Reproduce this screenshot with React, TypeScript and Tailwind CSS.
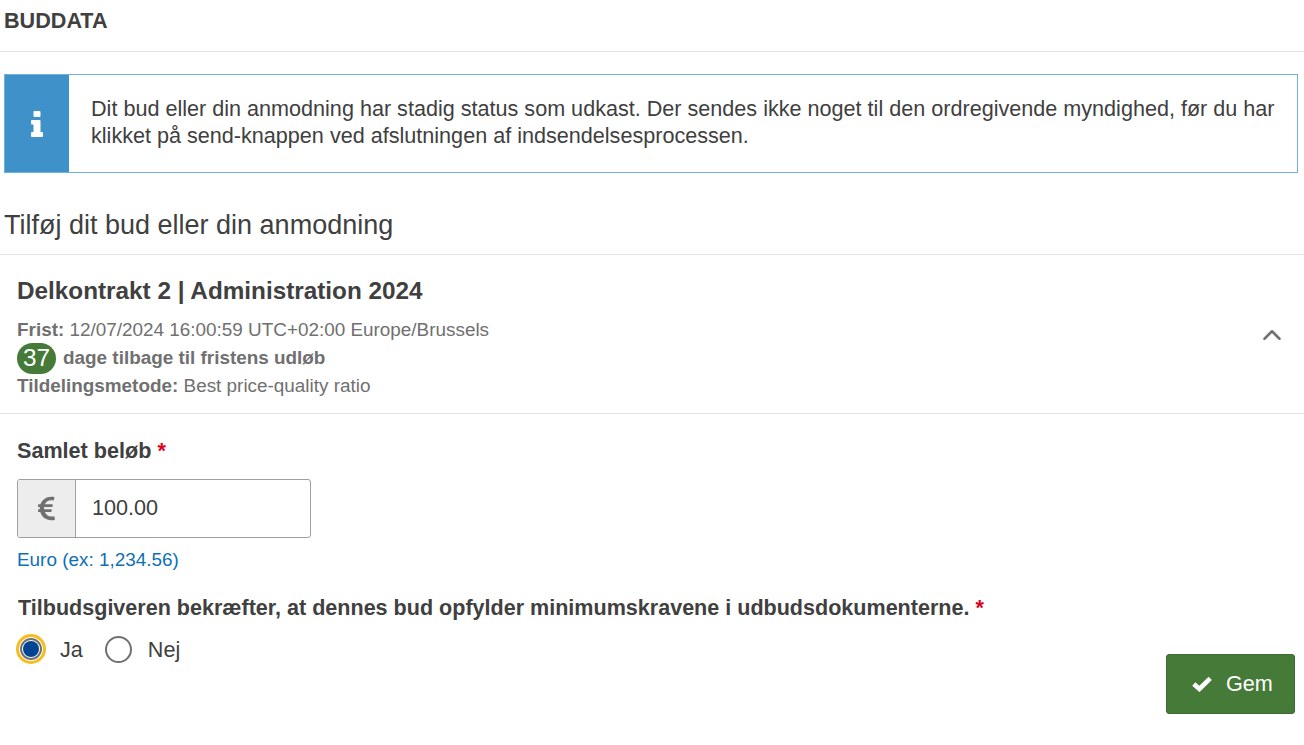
import { ChevronUp } from "lucide-react";
import { FaEuroSign } from "react-icons/fa";

const App = () => {
  return (
    <div className="min-h-[745px] bg-white font-['Liberation_Sans',Arial,sans-serif] text-[#404040]">
      <div className="h-[52px] border-b border-[#e3e3e3] pl-1 pt-[7px]">
        <h1 className="text-[21.6px] leading-[28px] font-bold">BUDDATA</h1>
      </div>

      <div className="mt-[22px] ml-1 mr-1.5 flex h-[99px] border border-[#6fb1da]">
        <div className="flex w-16 shrink-0 items-center justify-center bg-[#3e92c9] text-white">
          {/* info glyph */}
          <svg viewBox="0 0 12 26" className="h-[26px] w-3" fill="currentColor">
            <path d="M2.5 1a1 1 0 0 1 1-1h5a1 1 0 0 1 1 1v4a1 1 0 0 1-1 1h-5a1 1 0 0 1-1-1z" />
            <path d="M0 10a1 1 0 0 1 1-1h7.5a1 1 0 0 1 1 1v11h1.5a1 1 0 0 1 1 1v3a1 1 0 0 1-1 1H1a1 1 0 0 1-1-1v-3a1 1 0 0 1 1-1h1.5v-7.5H1a1 1 0 0 1-1-1z" />
          </svg>
        </div>
        <p className="pl-[22px] pr-4 pt-[20px] text-[21.6px] leading-[27px]">
          Dit bud eller din anmodning har stadig status som udkast. Der sendes ikke noget til den ordregivende myndighed, før du har klikket på send-knappen ved afslutningen af indsendelsesprocessen.
        </p>
      </div>

      <div className="h-[82px] border-b border-[#e3e3e3] pl-1 pt-[35px]">
        <h2 className="text-[27px] leading-[34px]">Tilføj dit bud eller din anmodning</h2>
      </div>

      <div className="relative h-[159px] border-b border-[#e3e3e3] pl-[17px] pt-[20px]">
        <h3 className="text-[24.3px] leading-[32px] font-bold">Delkontrakt 2 | Administration 2024</h3>
        <div className="mt-[9px] text-[18.9px] leading-[28px] text-[#707070]">
          <div>
            <b>Frist:</b> 12/07/2024 16:00:59 UTC+02:00 Europe/Brussels
          </div>
          <div className="flex h-[28px] items-center">
            <span className="flex h-[31px] w-[39px] shrink-0 items-center justify-center rounded-full bg-[#467a39] text-[24.3px] text-white">37</span>
            <b className="ml-[7px]">dage tilbage til fristens udløb</b>
          </div>
          <div>
            <b>Tildelingsmetode:</b> Best price-quality ratio
          </div>
        </div>
        <ChevronUp className="absolute right-[17px] top-[65px] size-[30px] text-[#707070]" strokeWidth={2} />
      </div>

      <div className="pl-[17px] pt-[22px]">
        <label className="block text-[21.6px] leading-[30px] font-bold">
          Samlet beløb <span className="text-[#e2001a]">*</span>
        </label>
        <div className="mt-[13px] flex h-[59px] w-[294px] overflow-hidden rounded-[3px] border border-[#a0a0a0]">
          <div className="flex w-[58px] items-center justify-center border-r border-[#a0a0a0] bg-[#ededed] text-[#707070]">
            <FaEuroSign className="text-[27px]" />
          </div>
          <div className="flex items-center pl-4 text-[21.6px]">100.00</div>
        </div>
        <p className="mt-[8px] text-[18.9px] leading-[28px] text-[#0e70b5]">Euro (ex: 1,234.56)</p>
        <p className="mt-[19px] pl-px text-[21.55px] leading-[30px] font-bold">
          Tilbudsgiveren bekræfter, at dennes bud opfylder minimumskravene i udbudsdokumenterne. <span className="text-[#e2001a]">*</span>
        </p>
        <div className="mt-[11px] flex items-center text-[21.6px] leading-[28px]">
          <span className="-ml-px mb-[2px] flex size-[30px] items-center justify-center rounded-full border-[3px] border-[#f5bd1e] bg-white">
            <span className="flex size-[22px] items-center justify-center rounded-full border-2 border-[#707070]">
              <span className="size-[16px] rounded-full bg-[#004494]" />
            </span>
          </span>
          <span className="ml-[14px]">Ja</span>
          <span className="mb-[2px] ml-[22px] size-[27px] rounded-full border-2 border-[#707070]" />
          <span className="ml-[16px]">Nej</span>
        </div>
      </div>

      <div className="absolute left-[1166px] top-[654px] flex h-[60px] w-[129px] items-center gap-[14px] rounded-[3px] border border-[#3d6b31] bg-[#467a39] pl-[25px] text-[21.6px] text-white">
        <svg viewBox="0 0 20 16" className="h-4 w-5" fill="none" stroke="currentColor" strokeWidth="4.6" strokeLinejoin="miter">
          <path d="M1.8 8 L7.4 13 L18.2 2.4" />
        </svg>
        Gem
      </div>
    </div>
  );
};

export default App;
